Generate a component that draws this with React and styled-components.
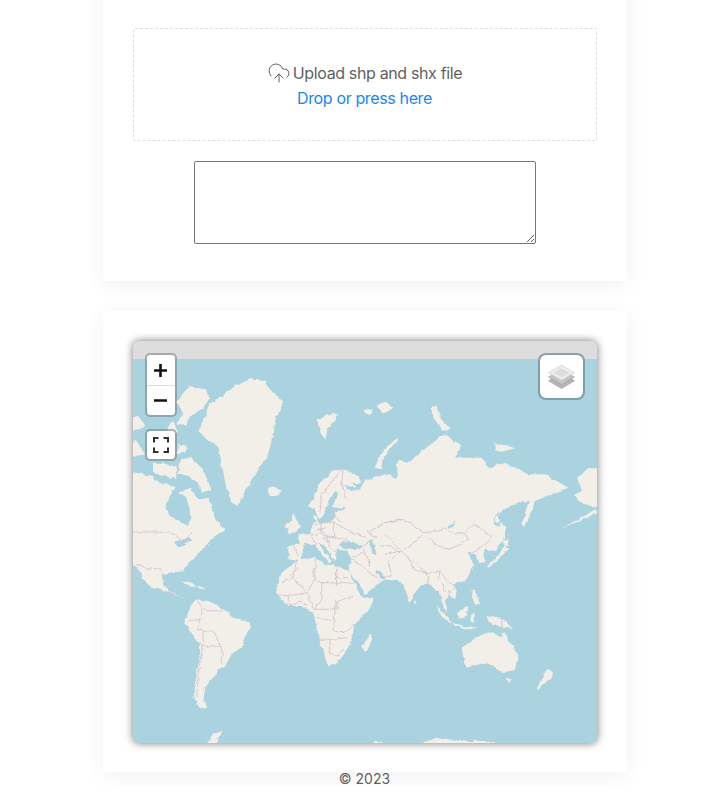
import React from "react";
import styled, { createGlobalStyle } from "styled-components";
import { CloudUpload } from "lucide-react";

const GlobalStyle = createGlobalStyle`
    html, body {
        margin: 0;
        padding: 0;
        background: #fff;
        overflow: hidden;
    }
    body {
        font-family: Inter, "Liberation Sans", sans-serif;
    }
`;

const Page = styled.main`
    display: flex;
    flex-direction: column;
    align-items: center;
    gap: 30px;
    margin-top: -30px;
    padding-left: 5px;
`;

const Card = styled.section`
    box-sizing: border-box;
    width: 524px;
    padding: ${(p) => p.$padding};
    display: flex;
    flex-direction: column;
    align-items: center;
    background: #fff;
    box-shadow: 0 4px 20px rgba(0, 0, 0, 0.06);
`;

const Dropzone = styled.div`
    box-sizing: border-box;
    width: 464px;
    height: 113px;
    display: flex;
    flex-direction: column;
    align-items: center;
    justify-content: center;
    gap: 5px;
    border: 1px dashed #dedede;
    border-radius: 2px;
    padding-top: 1px;
`;

const UploadTitle = styled.div`
    display: flex;
    align-items: center;
    gap: 2px;
    height: 20px;
    color: #5f5f5f;
    font-size: 16px;
    line-height: 20px;
    letter-spacing: -0.36px;
`;

const UploadLink = styled.div`
    color: #1a85f5;
    font-size: 16px;
    line-height: 20px;
    letter-spacing: -0.36px;
`;

const Notes = styled.textarea`
    box-sizing: border-box;
    display: block;
    width: 342px;
    height: 83px;
    margin: 20px 0 0;
    border: 1px solid #767676;
    border-radius: 2px;
    background: #fff;
    outline: none;
`;

const MapFrame = styled.div`
    position: relative;
    width: 464px;
    height: 402px;
    border-radius: 6px;
    overflow: hidden;
    background: #ddd;
    box-shadow: 0 0 8px rgba(0, 0, 0, 0.55);
`;

const MapCanvas = styled.svg`
    display: block;
    width: 464px;
    height: 402px;
    filter: blur(0.4px);
`;

const ZoomBar = styled.div`
    position: absolute;
    left: 12px;
    top: 12px;
    width: 32px;
    border: 2px solid rgba(110, 120, 125, 0.5);
    border-radius: 5px;
    box-sizing: border-box;
    background: #fff;
    background-clip: padding-box;
    display: flex;
    flex-direction: column;
`;

const ZoomButton = styled.div`
    height: 30px;
    display: flex;
    align-items: center;
    justify-content: center;
    border-top: ${(p) => (p.$divided ? "1px solid #ddd" : "none")};
`;

const MinusButton = styled(ZoomButton)`
    height: 29px;
`;

const FullscreenButton = styled(ZoomBar)`
    top: 88px;
    height: 32px;
    align-items: center;
    justify-content: center;
`;

const LayersButton = styled.div`
    position: absolute;
    right: 12px;
    top: 12px;
    box-sizing: border-box;
    width: 47px;
    height: 47px;
    display: flex;
    align-items: center;
    justify-content: center;
    background: #fff;
    background-clip: padding-box;
    border: 2px solid rgba(110, 135, 145, 0.7);
    border-radius: 8px;
`;

const Footer = styled.footer`
    margin-top: -30px;
    color: #5f5f5f;
    font-size: 14px;
    line-height: 14px;
`;

// coastlines were read off crops at 3x, so points are given as crop coordinates
const crop = (ox, oy, pts) =>
    pts
        .trim()
        .split(/\s+/)
        .map((pt) => {
            const [x, y] = pt.split(",").map(Number);
            return `${(ox + x / 3).toFixed(1)} ${(oy + y / 3).toFixed(1)}`;
        });

const shape = (...segs) => "M" + segs.flat().join("L") + "Z";

const land = [
    // north america
    shape(
        crop(125, 375, "0,285"),
        crop(133, 375, "60,300 75,320 130,330 110,360 100,395 110,420 165,450 172,425 170,400 160,365 135,350 170,335 200,370 225,365 250,430 275,465 245,480"),
        crop(125, 540, "255,0 200,60 175,85 185,105 175,88 110,100 115,130 135,155 165,165 190,185 170,170 130,155 75,135 45,100 60,120 35,80 20,70 0,60"),
    ),
    // arctic canada
    shape(crop(133, 375, "130,80 170,30 215,40 235,65 205,100 165,125 160,150 130,140 150,110")),
    shape(crop(133, 375, "140,250 175,245 210,280 235,340 205,350 195,320 165,300 135,290")),
    shape(crop(133, 375, "60,260 130,270 130,310 90,300 60,290")),
    shape(crop(125, 375, "0,200 35,195 60,235 30,240 0,235")),
    shape(crop(133, 375, "135,205 165,210 155,230 130,235")),
    shape(crop(133, 375, "120,135 135,165 120,190 100,160")),
    shape(crop(125, 375, "0,130 40,120 60,150 20,165 0,160")),
    // greenland and iceland
    shape(crop(125, 330, "375,145 420,150 440,180 475,212 450,270 445,320 425,380 395,420 360,480 340,525 318,510 300,450 290,400 280,345 250,330 220,300 240,260 250,225 290,195 330,165")),
    shape(crop(125, 330, "425,475 445,465 470,480 455,495 435,495")),
    // svalbard and arctic islands
    shape(crop(125, 330, "575,265 605,250 640,250 625,275 610,290 600,325 585,300")),
    shape(crop(365, 330, "30,410 45,370 95,320 100,325 60,370 50,415")),
    shape(crop(365, 330, "200,225 215,225 225,260 255,295 235,300 205,260")),
    shape(crop(365, 330, "0,235 25,235 20,250 0,250")),
    shape(crop(365, 330, "35,225 60,210 85,230 55,250")),
    shape(crop(365, 330, "388,338 420,342 450,352 410,362 390,358")),
    // south america
    shape(crop(125, 540, "215,175 250,180 300,205 320,225 375,245 375,265 360,285 355,315 320,340 300,375 280,385 265,410 240,440 235,480 248,500 225,505 205,470 215,400 225,340 225,310 205,285 180,240 195,200")),
    shape(crop(125, 540, "245,610 265,580 290,570 270,610")),
    // africa
    shape(
        crop(125, 540, "455,130 470,95 520,55 570,50 600,70 640,75 675,95 690,130 710,170"),
        crop(365, 540, "25,170 12,205 0,215"),
        crop(125, 540, "690,250 675,310 640,365 610,375 590,320 575,260 565,215 530,195 490,195 455,160"),
    ),
    shape(crop(365, 540, "20,275 17,305 0,335 -8,315")),
    // eurasia
    shape(
        crop(280, 465, "85,120 100,95 115,60 135,35 160,15 190,10 225,25 245,45 225,65 190,55 210,75 235,72 258,45"),
        crop(365, 330, "0,450 60,430 95,440 100,390 130,395 150,380 190,345 240,310 290,345 270,380 350,380 370,410 420,395 490,430 540,430 610,470 560,490 510,510 480,590 470,580 495,510 440,520 400,550 385,575 415,590 410,640"),
        crop(385, 490, "340,60 325,90 352,100 350,150 330,180 300,175 295,190 300,215 285,215 272,190 250,185 268,225 240,270 205,280 215,300 210,325 190,310 180,330 190,370 170,335 165,300 150,300 135,275 125,275 90,300 75,335 55,280 40,270 0,265"),
        crop(365, 540, "60,115 40,130 0,165"),
        crop(280, 465, "240,355 205,315 215,280 200,255 170,250 168,285 152,270 130,235 115,228 135,262 155,285 150,290 125,265 105,240 75,230 65,265 60,285 25,280 25,240 60,235 52,205 90,200 100,170 110,165 100,150 110,150 115,175 160,165 165,140 200,122 165,125 155,120 175,85 165,75 150,95 130,150 118,160 100,130"),
    ),
    // uk and ireland
    shape(crop(280, 465, "22,195 40,140 50,165 65,185 50,195 28,205")),
    shape(crop(280, 465, "15,175 28,168 30,182 18,187")),
    // alaska wrap
    shape(crop(365, 330, "640,440 665,415 690,410 710,405 710,535 690,530 640,510 630,490 650,480")),
    shape(crop(365, 330, "690,535 650,560 590,590 650,568 700,545")),
    // japan, sakhalin and islands
    shape(crop(385, 490, "305,225 345,185 360,160 350,155 370,175 345,200 310,230")),
    shape(crop(385, 490, "352,150 370,145 372,165 355,165")),
    shape(crop(385, 490, "350,100 360,105 360,145 352,140")),
    shape(crop(385, 490, "285,190 298,205 292,212 280,205")),
    shape(crop(365, 540, "320,145 330,150 340,175 345,190 330,190 322,170")),
    shape(crop(365, 540, "215,195 235,215 262,245 240,235 220,210")),
    shape(crop(365, 540, "262,245 300,255 340,260 310,265 270,255")),
    shape(crop(365, 540, "275,215 295,200 310,195 305,225 285,235")),
    shape(crop(365, 540, "315,225 330,215 325,240 332,245 318,243")),
    shape(crop(365, 540, "365,225 395,232 415,235 445,265 420,258 390,255 370,240")),
    shape(crop(365, 540, "148,180 155,190 148,193")),
    // australia and new zealand
    shape(crop(365, 540, "290,320 340,285 375,270 410,290 415,270 460,340 450,385 415,400 390,375 360,365 305,380 295,350")),
    shape(crop(365, 540, "425,412 440,412 432,428")),
    shape(crop(365, 540, "515,440 530,420 545,380 565,395 555,410 530,435 520,447")),
    // antarctica
    shape(crop(365, 540, "20,610 30,598 50,603 55,610")),
    shape(crop(365, 540, "165,610 180,602 215,590 250,598 300,600 360,600 395,610")),
    // caribbean
    shape(crop(125, 540, "170,120 200,125 215,140 195,135")),
    shape(crop(125, 540, "215,135 245,140 225,145")),
];

const water = [
    // great lakes
    "M175 541L183 538L190 536L192 540L184 544L178 548Z",
    // black sea, caspian, white sea, baikal
    shape(crop(280, 465, "180,235 205,225 250,240 235,250 195,250")),
    shape(crop(280, 465, "265,220 280,225 290,268 275,265 270,240")),
    shape(crop(280, 465, "215,50 240,52 230,62")),
    shape(crop(385, 490, "190,108 212,85 205,105 192,115")),
    // persian gulf, great bear lake
    shape(crop(280, 465, "290,310 320,335 310,340 285,320")),
    "M172 589L176 587L176 590Z",
];

const europe = [
    "120,140 125,85 160,40 190,10 185,50 200,100",
    "100,175 125,170 160,170 190,185 230,205 260,215",
    "125,170 120,205 90,205 110,240",
    "120,205 165,215 200,220 175,240",
    "160,170 165,215 130,215 170,260",
    "190,170 160,150 165,130",
    "265,195 320,170 360,160",
    "260,195 290,215 250,240 270,300",
    "300,240 330,240 360,260",
    "250,255 215,280 260,310 300,345",
    "30,330 60,300",
    "100,305 100,340",
    "170,305 170,360",
    "205,335 170,335",
    "40,240 55,270",
    "140,185 115,190 135,205",
    "140,215 150,240",
];

const asia = [
    "0,95 40,85 75,95 115,125 160,120 175,110 210,130 240,125 265,100 290,115 320,135 300,160 285,170",
    "130,140 165,170 200,175 250,145 240,125",
    "115,125 80,160 50,180 75,205 85,235 125,245 165,240 160,270",
    "45,180 10,215 20,250 0,260",
    "0,130 30,160 50,180 0,190",
    "125,245 130,270 150,300",
    "165,240 190,275 210,290 190,310",
    "170,275 180,300 205,305",
    "285,170 265,185",
    "75,205 100,225 125,245",
];

const lineOf = (ox, oy, pts) => "M" + crop(ox, oy, pts).join("L");

const borders = [
    ...europe.map((pts) => lineOf(280, 465, pts)),
    ...asia.map((pts) => lineOf(385, 490, pts)),
    "M125 531H170L178 537L184 540L192 532",
    // mexico and central america
    lineOf(125, 540, "30,70 75,85 105,80 135,150"),
    lineOf(125, 540, "130,155 150,165 165,165"),
    // south america
    lineOf(125, 540, "215,175 235,205 225,235 190,240"),
    lineOf(125, 540, "235,205 270,210 300,205"),
    lineOf(125, 540, "225,235 215,265 235,270 265,270 280,300 295,340 290,370"),
    lineOf(125, 540, "235,270 230,330 220,400 215,470"),
    lineOf(125, 540, "230,315 265,315 285,320"),
    // africa
    lineOf(125, 540, "515,55 505,110 545,155 490,165 455,160"),
    lineOf(125, 540, "570,50 570,115 545,155 565,205"),
    lineOf(125, 540, "570,115 590,125 635,125 635,75"),
    lineOf(125, 540, "635,125 685,125"),
    lineOf(125, 540, "590,125 590,175 570,205 630,205 640,180 685,165"),
    lineOf(125, 540, "630,205 625,270 655,275 690,250"),
    lineOf(125, 540, "575,230 625,240"),
    lineOf(125, 540, "580,295 620,295 665,290"),
    lineOf(125, 540, "615,295 615,340 640,345 660,320"),
    lineOf(125, 540, "490,165 495,195 520,180 545,190"),
    lineOf(125, 540, "500,110 470,125"),
    lineOf(125, 540, "630,175 640,205"),
    // papua
    "M502 617V628",
];

function WorldMap() {
    return (
        <MapCanvas viewBox="133 340 464 402">
            <defs>
                <filter
                    id="coast"
                    filterUnits="userSpaceOnUse"
                    x="120"
                    y="340"
                    width="490"
                    height="410"
                    colorInterpolationFilters="sRGB"
                >
                    <feTurbulence type="fractalNoise" baseFrequency="0.16" numOctaves="3" seed="4" />
                    <feDisplacementMap in="SourceGraphic" scale="4" xChannelSelector="R" yChannelSelector="G" />
                </filter>
            </defs>
            <rect x="133" y="358" width="464" height="384" fill="#aad3df" />
            <g filter="url(#coast)">
                <g fill="#f2efe9">
                    {land.map((d) => (
                        <path key={d} d={d} />
                    ))}
                </g>
                <g fill="#aad3df">
                    {water.map((d) => (
                        <path key={d} d={d} />
                    ))}
                </g>
                <g fill="none" stroke="#d6c2cf" strokeWidth="0.9" strokeLinejoin="round">
                    {borders.map((d) => (
                        <path key={d} d={d} />
                    ))}
                </g>
            </g>
        </MapCanvas>
    );
}

function PlusIcon() {
    return (
        <svg width="13" height="13" viewBox="0 0 13 13">
            <path d="M6.500 0V13M0 6.500H13" stroke="#111" strokeWidth="2.600" />
        </svg>
    );
}

function MinusIcon() {
    return (
        <svg width="13" height="13" viewBox="0 0 13 13">
            <path d="M0 6.500H13" stroke="#111" strokeWidth="2.400" />
        </svg>
    );
}

function FullscreenIcon() {
    return (
        <svg width="16" height="16" viewBox="0 0 16 16" fill="none" stroke="#333" strokeWidth="2">
            <path d="M1 5.500V1H5.500M10.500 1H15V5.500M15 10.500V15H10.500M5.500 15H1V10.500" />
        </svg>
    );
}

function LayersIcon() {
    return (
        <svg width="27" height="26" viewBox="0 0 28 27">
            <path d="M14 10L27.500 17.500L14 25.500L.5 17.500Z" fill="#b5b5b5" stroke="#999" strokeWidth=".6" />
            <path d="M14 6L27.500 13.500L14 21.500L.5 13.500Z" fill="#c4c4c4" stroke="#999" strokeWidth=".6" />
            <path d="M14 1L27.500 9L14 17L.5 9Z" fill="#ececec" stroke="#ccc" strokeWidth=".6" />
            <path d="M14 4.500L22 9L14 13.500L6 9Z" fill="#dcdcdc" />
        </svg>
    );
}

function App() {
    return (
        <>
            <GlobalStyle />
            <Page>
                <Card $padding="58px 0 37px">
                    <Dropzone>
                        <UploadTitle>
                            <CloudUpload size={24} strokeWidth={1} color="#5f5f5f" />
                            Upload shp and shx file
                        </UploadTitle>
                        <UploadLink>Drop or press here</UploadLink>
                    </Dropzone>
                    <Notes />
                </Card>
                <Card $padding="30px 0 29px">
                    <MapFrame>
                        <WorldMap />
                        <ZoomBar>
                            <ZoomButton><PlusIcon /></ZoomButton>
                            <MinusButton $divided><MinusIcon /></MinusButton>
                        </ZoomBar>
                        <FullscreenButton><FullscreenIcon /></FullscreenButton>
                        <LayersButton><LayersIcon /></LayersButton>
                    </MapFrame>
                </Card>
                <Footer>© 2023</Footer>
            </Page>
        </>
    );
}

export default App;
